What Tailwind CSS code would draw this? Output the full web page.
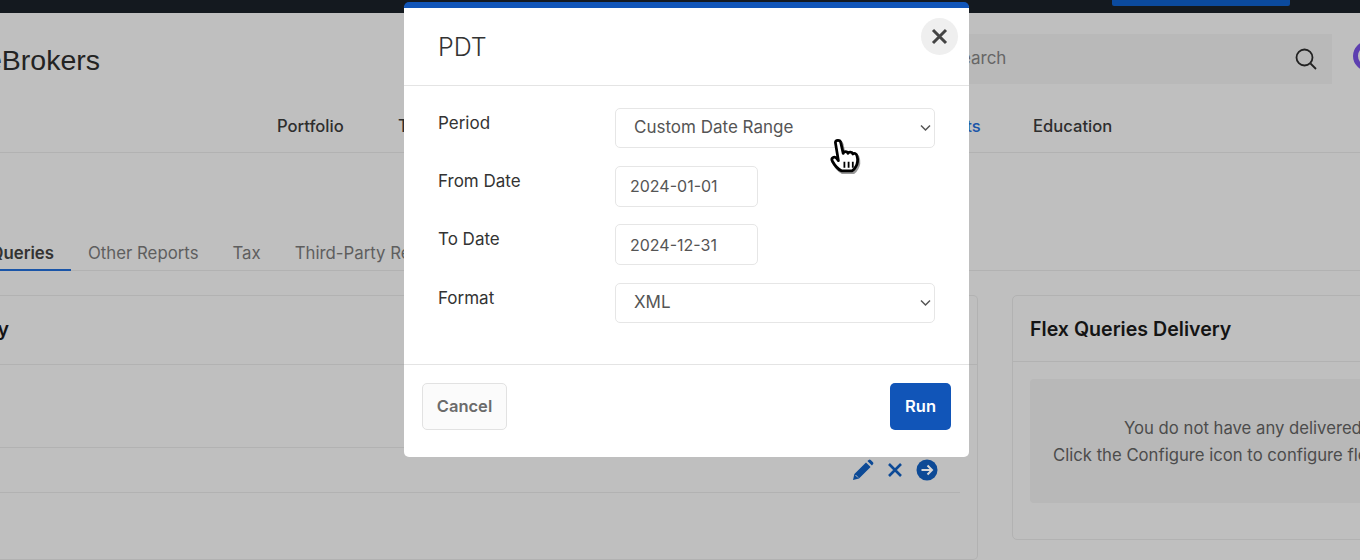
<!DOCTYPE html>
<html lang="en">
<head>
<meta charset="utf-8">
<title>PDT</title>
<script src="https://cdn.jsdelivr.net/npm/@tailwindcss/browser@4"></script>
</head>
<body class="w-[1360px] h-[560px] overflow-hidden bg-[#bfbfbf] font-['Inter','Open_Sans',sans-serif] relative">
  <div class="h-[13px] bg-[#14191f] flex pl-[1112px]">
    <div class="w-[178px] h-[6px] bg-[#0b4a9e] rounded-b-[2px]"></div>
  </div>
  <header class="h-[140px] border-b border-[#b2b2b2] flex flex-col">
    <div class="h-[92px] flex items-start">
      <div class="w-[100px] h-[72px] overflow-hidden flex justify-end items-center shrink-0">
        <span class="font-['Liberation_Sans',sans-serif] text-[28.5px] text-[#232323] leading-none whitespace-nowrap mt-[22px]">eBrokers</span>
      </div>
      <div class="ml-[860px] mt-[21px] w-[372px] h-[50px] bg-[#b9b9b9] flex items-center justify-between pr-[14px] shrink-0">
        <span class="text-[17px] text-[#666] -ml-[10px]">Search</span>
        <svg width="24" height="24" viewBox="0 0 24 24" fill="none" stroke="#222" stroke-width="1.8"><circle cx="10.5" cy="10.5" r="8"/><path d="M16.5 16.5 22 22"/></svg>
      </div>
      <div class="ml-[21px] mt-[28px] w-[30px] h-[30px] rounded-full border-[5px] border-[#5d3fb0] shrink-0"></div>
    </div>
    <nav class="h-[42px] flex items-center pl-[277px] text-[16.6px] font-medium text-[#2e2e2e]">
      <span class="w-[121px]">Portfolio</span>
      <span class="w-[521px]">Trade</span>
      <span class="w-[114px] text-[#1a55a8]">Reports</span>
      <span>Education</span>
    </nav>
  </header>
  <div class="h-[118px] flex items-end border-b border-[#b2b2b2] text-[16.8px]">
    <div class="w-[71px] h-[30px] border-b-[2px] border-[#1a55a8] -mb-px flex justify-end pr-[17px] overflow-hidden shrink-0 font-semibold text-[#333]"><span class="whitespace-nowrap">Flex Queries</span></div>
    <div class="ml-[17px] h-[29px] flex gap-[34px] text-[#5e5e5e] whitespace-nowrap"><span>Other Reports</span><span>Tax</span><span>Third-Party Reports</span></div>
  </div>
  <main class="flex items-start pt-[24px] gap-[34px] -mr-[300px]">
    <section class="w-[978px] h-[265px] border border-l-0 border-[#b2b2b2] rounded-r-[5px] shrink-0">
      <div class="h-[69px] border-b border-[#b2b2b2] flex justify-end items-center pr-[968px] overflow-hidden"><span class="text-[19.6px] font-semibold text-[#141414] whitespace-nowrap">Flex Queries Summary</span></div>
      <div class="h-[83px] border-b border-[#b2b2b2] mr-[17px]"></div>
      <div class="h-[45px] border-b border-[#b2b2b2] mr-[17px] flex items-center justify-end gap-[12px] pr-[22px]">
        <svg width="22" height="22" viewBox="0 0 22 22" fill="#0d4a96"><path d="M1 21l1.400-6L14 3.400l4.600 4.600L7 19.600zM15.400 2l1.300-1.100a1.500 1.500 0 0 1 2 0l2.300 2.300a1.500 1.500 0 0 1 0 2L19.900 6.600z"/><path d="M3.500 16l2.500 2.500" stroke="#bfbfbf" stroke-width="1"/></svg>
        <svg width="18" height="18" viewBox="0 0 18 18" fill="none" stroke="#0d4a96" stroke-width="2.600"><path d="M3 3l12 12M15 3 3 15"/></svg>
        <svg width="22" height="22" viewBox="0 0 22 22"><circle cx="11" cy="11" r="10.500" fill="#0d4a96"/><path d="M5.500 11h10M11.500 6.500 16 11l-4.500 4.500" fill="none" stroke="#d8d8d8" stroke-width="2"/></svg>
      </div>
    </section>
    <section class="w-[600px] h-[245px] border border-[#b2b2b2] rounded-[5px] shrink-0">
      <div class="h-[66px] border-b border-[#b2b2b2] flex items-center pt-[2px] pl-[17px] text-[19.6px] font-semibold text-[#141414]">Flex Queries Delivery</div>
      <div class="mx-[17px] mt-[17px] h-[124px] bg-[#b8b8b8] rounded-[4px] flex flex-col items-start justify-center pt-[2px] text-[16.7px] leading-[27px] text-[#4c4c4c] whitespace-nowrap">
        <span class="ml-[94px]">You do not have any delivered Flex Queries.</span>
        <span class="ml-[23px]">Click the Configure icon to configure flex queries delivery.</span>
      </div>
    </section>
  </main>

  <div role="dialog" class="absolute left-[404px] top-[2px] w-[565px] h-[455px] bg-white border-t-[6px] border-[#1155b8] rounded-[5px] flex flex-col">
    <div class="h-[78px] border-b border-[#e4e4e4] flex items-center justify-between pl-[34px] pr-[11px] relative shrink-0">
      <h2 class="text-[25px] font-light text-[#333] mt-[3px]">PDT</h2>
      <button class="absolute right-[11px] top-[10px] w-[37px] h-[37px] rounded-full bg-[#efefef] flex items-center justify-center" aria-label="Close">
        <svg width="17" height="17" viewBox="0 0 17 17" fill="none" stroke="#444" stroke-width="3"><path d="M2 2l13 13M15 2 2 15"/></svg>
      </button>
    </div>
    <form class="h-[279px] shrink-0 border-b border-[#e4e4e4] pt-[22px] pl-[34px] grid grid-cols-[177px_320px] auto-rows-min gap-y-[17.5px] text-[17px]">
      <label class="text-[#333] pt-[3px]">Period</label>
      <div class="relative h-[40px]">
        <select class="appearance-none w-full h-full border border-[#e6e6e6] rounded-[5px] pl-[18px] text-[#555] bg-white"><option>Custom Date Range</option></select>
        <svg class="absolute right-[4px] top-[16px]" width="11" height="8" viewBox="0 0 11 8" fill="none" stroke="#555" stroke-width="1.500"><path d="M1 1.500 5.500 6 10 1.500"/></svg>
      </div>
      <label class="text-[#333] pt-[3px]">From Date</label>
      <input value="2024-01-01" class="w-[143px] h-[41px] border border-[#e6e6e6] rounded-[5px] pl-[14px] text-[16px] text-[#555]">
      <label class="text-[#333] pt-[3px]">To Date</label>
      <input value="2024-12-31" class="w-[143px] h-[41px] border border-[#e6e6e6] rounded-[5px] pl-[14px] text-[16px] text-[#555]">
      <label class="text-[#333] pt-[3px]">Format</label>
      <div class="relative h-[40px]">
        <select class="appearance-none w-full h-full border border-[#e6e6e6] rounded-[5px] pl-[18px] text-[#555] bg-white"><option>XML</option></select>
        <svg class="absolute right-[4px] top-[16px]" width="11" height="8" viewBox="0 0 11 8" fill="none" stroke="#555" stroke-width="1.500"><path d="M1 1.500 5.500 6 10 1.500"/></svg>
      </div>
    </form>
    <div class="flex-1 flex justify-between items-start pt-[18px] pl-[18px] pr-[18px]">
      <button class="w-[85px] h-[47px] border border-[#e2e2e2] rounded-[5px] bg-[#fbfbfb] text-[16.5px] font-semibold text-[#6b6b6b]">Cancel</button>
      <button class="w-[61px] h-[47px] rounded-[5px] bg-[#1155b8] text-[16.5px] font-semibold text-white">Run</button>
    </div>
  </div>

  <svg class="absolute left-[827px] top-[136px]" width="36" height="40" viewBox="0 0 30 33.3" aria-hidden="true">
    <path transform="translate(1 1.500)" d="M7 5.500c0-2.500 4-2.700 4.500 0l2 9c.5-2 3.500-2 4 0 .5-1.500 3.500-1.500 4 .5 1-1 3-.5 3.500 1.500 1 3.500.5 6.500-1 9-1 2-2 3-3 3.500H12c-2-1-5-3.500-7.500-8-1.500-2.500 1.500-4.500 3.500-2.500l1.500 2z" fill="#000" stroke="#000" stroke-width="2.500" opacity=".4"/>
    <path d="M7 5.500c0-2.500 4-2.700 4.500 0l2 9c.5-2 3.500-2 4 0 .5-1.500 3.500-1.500 4 .5 1-1 3-.5 3.500 1.500 1 3.500.5 6.500-1 9-1 2-2 3-3 3.500H12c-2-1-5-3.500-7.500-8-1.500-2.500 1.500-4.500 3.500-2.500l1.500 2z" fill="#fff" stroke="#000" stroke-width="2.300" stroke-linejoin="round"/>
    <path d="M14.500 21.500v5M18 21.500v5M21.500 21.500v5" stroke="#000" stroke-width="1.500"/>
  </svg>
</body>
</html>
